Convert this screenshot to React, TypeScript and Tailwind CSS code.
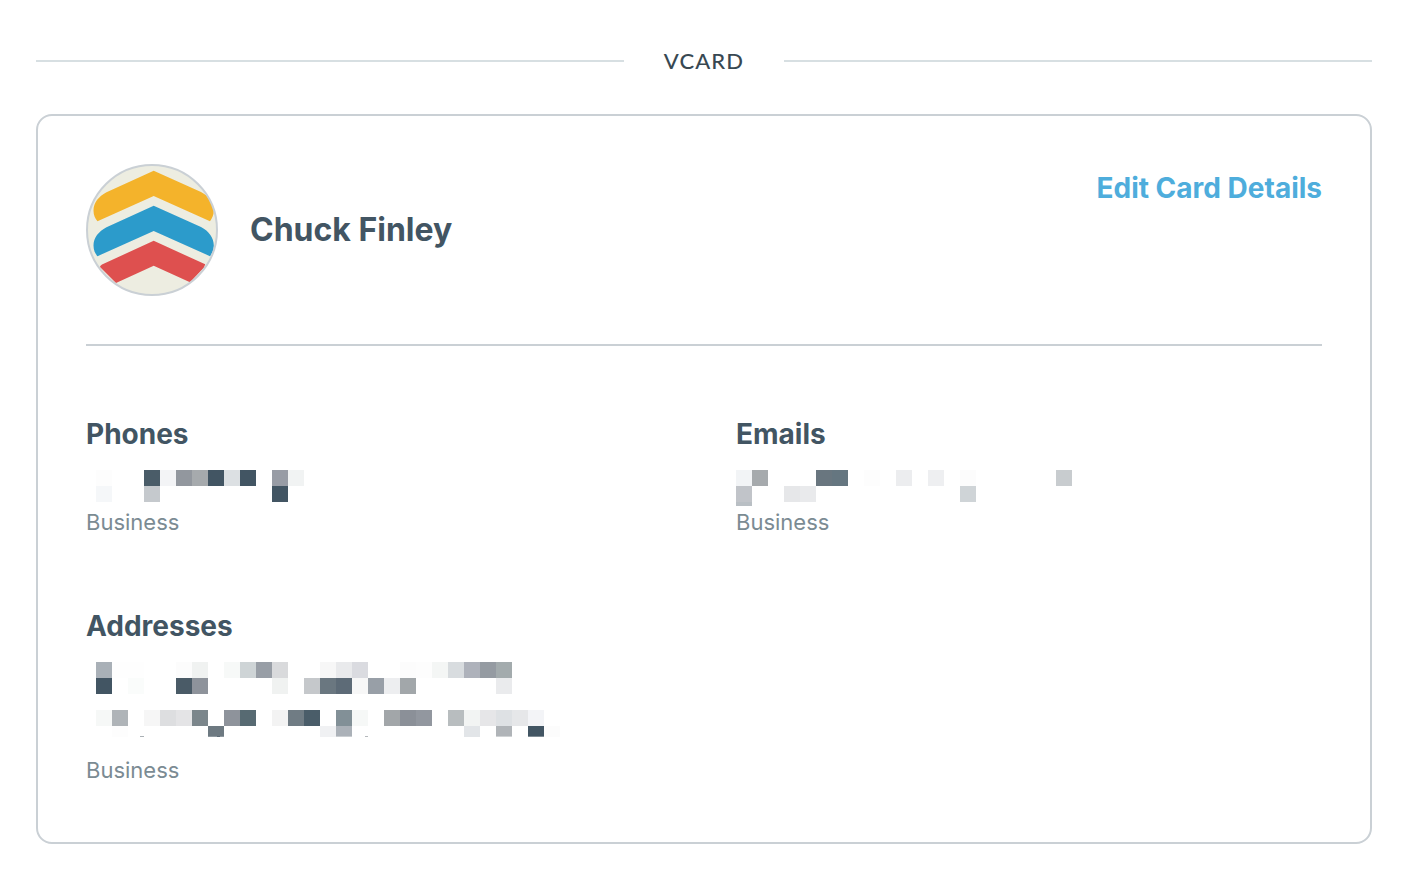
import React from 'react';

type Cell = [x: number, y: number, color: string, height?: number, width?: number];

const CELL = 16;

const phoneCells: Cell[] = [
  [10, 0, '#fdfdfd'],
  [58, 0, '#4a5c68'],
  [74, 0, '#f3f4f6'],
  [90, 0, '#92979e'],
  [106, 0, '#a6aaad'],
  [122, 0, '#425563'],
  [138, 0, '#dce0e3'],
  [154, 0, '#425563'],
  [186, 0, '#989ca5'],
  [202, 0, '#f1f3f3'],
  [10, 16, '#f5f7f9'],
  [58, 16, '#c5c9cd'],
  [186, 16, '#425563'],
];

const emailCells: Cell[] = [
  [0, 0, '#f2f4f6'],
  [16, 0, '#a6aaad'],
  [80, 0, '#69767f'],
  [96, 0, '#657680'],
  [128, 0, '#fdfdfd'],
  [160, 0, '#ecedef'],
  [192, 0, '#eeeff1'],
  [224, 0, '#fcfcfc'],
  [320, 0, '#c8cccf'],
  [0, 16, '#c1c4c9'],
  [0, 32, '#b9bfc4', 4],
  [48, 16, '#e6e7e9'],
  [64, 16, '#e9eaec'],
  [224, 16, '#cfd4d7'],
];

const addressCells: Cell[] = [
  [10, 0, '#a9b0b7'],
  [26, 0, '#fefefe'],
  [42, 0, '#fefefe'],
  [90, 0, '#fcfcfc'],
  [106, 0, '#f0f2f1'],
  [138, 0, '#f7f9f8'],
  [154, 0, '#ced4d6'],
  [170, 0, '#989ea6'],
  [186, 0, '#d9dadc'],
  [234, 0, '#f7f7f7'],
  [250, 0, '#e9eaec'],
  [266, 0, '#dadbe0'],
  [314, 0, '#fcfcfc'],
  [330, 0, '#fdfdfd'],
  [346, 0, '#f4f6f5'],
  [362, 0, '#d8dcdf'],
  [378, 0, '#aeb2bb'],
  [394, 0, '#959ba2'],
  [410, 0, '#a3abad'],
  [10, 16, '#425563'],
  [42, 16, '#fafcfb'],
  [90, 16, '#4a5b67'],
  [106, 16, '#8e939b'],
  [186, 16, '#f0f2f1'],
  [218, 16, '#c5c8cb'],
  [234, 16, '#6a7780'],
  [250, 16, '#5d6b77'],
  [266, 16, '#f7f7f7'],
  [282, 16, '#989fa7'],
  [298, 16, '#edeef0'],
  [314, 16, '#a2a7aa'],
  [410, 16, '#eaebed'],
  [10, 48, '#f6f8f7'],
  [26, 48, '#afb4b8'],
  [58, 48, '#f6f6f6'],
  [74, 48, '#dddee0'],
  [90, 48, '#e4e4e6'],
  [106, 48, '#7b868b'],
  [138, 48, '#8e939b'],
  [154, 48, '#576a72'],
  [186, 48, '#f3f3f3'],
  [202, 48, '#707c84'],
  [218, 48, '#4a5d69'],
  [250, 48, '#829097'],
  [266, 48, '#f6f8f7'],
  [298, 48, '#a2a6a9'],
  [314, 48, '#8b9098'],
  [330, 48, '#92979f'],
  [362, 48, '#b8bdbf'],
  [378, 48, '#f2f4f3'],
  [394, 48, '#e6e6e8'],
  [410, 48, '#dee1e4'],
  [426, 48, '#e6e7e9'],
  [442, 48, '#f3f4f7'],
  [26, 64, '#fdfdfd', 11],
  [122, 64, '#6d7981', 10],
  [122, 74, '#8e989f', 1],
  [234, 64, '#f0f1f3', 11],
  [250, 64, '#abb1b8', 10],
  [250, 74, '#c9cdd1', 1],
  [378, 64, '#e2e5e8', 11],
  [410, 64, '#b0b4b8', 10],
  [410, 74, '#cfd2d4', 1],
  [442, 64, '#425563', 10],
  [442, 74, '#7e8b94', 1],
  [458, 64, '#fcfcfc', 11],
  // tails of the letters below the last row
  [54, 74, '#aab0b5', 1, 4],
  [131, 74, '#5d6b77', 1, 3],
  [279, 74, '#b5b9bc', 1, 3],
];

const Redacted: React.FC<{ cells: Cell[]; width: number; height: number }> = ({
  cells,
  width,
  height,
}) => (
  <svg
    width={width}
    height={height}
    viewBox={`0 0 ${width} ${height}`}
    shapeRendering="crispEdges"
    className="mt-4 block max-w-full"
    aria-hidden="true"
  >
    {cells.map(([x, y, color, h = CELL, w = CELL], i) => (
      <rect key={i} x={x} y={y} width={w} height={h} fill={color} />
    ))}
  </svg>
);

const Avatar: React.FC = () => (
  <svg viewBox="0 0 132 132" className="size-[132px] shrink-0" aria-hidden="true">
    <defs>
      <clipPath id="avatar-clip">
        <circle cx="66" cy="66" r="65" />
      </clipPath>
    </defs>
    <g clipPath="url(#avatar-clip)">
      <rect width="132" height="132" fill="#edede1" />
      <path
        d="M67.7 6.8 L115 28 C123 32 127.8 39 127.8 46.5 C127.8 51 126 54.5 124 57.2 L67.7 32 L11.5 57.2 C9 54.5 7.5 51 7.5 46.5 C7.5 39 12.5 32.5 20.5 28.3 Z"
        fill="#f4b32b"
      />
      <path
        d="M67.7 41.8 L115 63 C123 67 127.8 74 127.8 81.5 C127.8 86 126 89.5 124 92.2 L67.7 67 L11.5 92.2 C9 89.5 7.5 86 7.5 81.5 C7.5 74 12.5 67.5 20.5 63.3 Z"
        fill="#2c9bcb"
      />
      <path
        d="M67.7 76.8 L119.2 100.3 L118 103.5 L104 118.3 L67.7 101.8 L30 119 L14 103 Q14 101.5 16 100.5 Z"
        fill="#de504f"
      />
    </g>
    <circle cx="66" cy="66" r="65" fill="none" stroke="#cad0d5" strokeWidth="2" />
  </svg>
);

const Section: React.FC<{ title: string; label: string; children: React.ReactNode }> = ({
  title,
  label,
  children,
}) => (
  <section>
    <h3 className="text-[28px] leading-10 font-bold text-[#425563]">{title}</h3>
    {children}
    <p className="text-[22px] leading-8 text-[#7b8b93]">{label}</p>
  </section>
);

const App: React.FC = () => {
  return (
    <main className="bg-white pt-11 pr-[30px] pb-6 pl-9 font-['Inter',sans-serif]">
      {/* Title with rules on both sides */}
      <div className="flex items-center gap-10">
        <div className="h-0.5 flex-1 bg-[#d7dfe2]" />
        <h1 className="font-['Lato',sans-serif] text-[22px] leading-[34px] font-medium tracking-wider text-[#384852]">
          VCARD
        </h1>
        <div className="h-0.5 flex-1 bg-[#d7dfe2]" />
      </div>

      {/* Card */}
      <article className="mt-9 rounded-2xl border-2 border-[#cad0d5] px-12 pt-12 pb-14">
        <header className="flex items-start justify-between border-b-2 border-[#cad0d5] pb-12">
          <div className="flex items-center gap-8">
            <Avatar />
            <h2 className="text-[32px] leading-10 font-bold text-[#425563]">Chuck Finley</h2>
          </div>
          <a href="#edit" className="mt-1 text-[28px] leading-10 font-bold text-[#4eaddc]">
            Edit Card Details
          </a>
        </header>

        <div className="grid grid-cols-2 gap-x-16 gap-y-[68px] pt-[68px]">
          <Section title="Phones" label="Business">
            <Redacted cells={phoneCells} width={240} height={36} />
          </Section>
          <Section title="Emails" label="Business">
            <Redacted cells={emailCells} width={352} height={36} />
          </Section>
          <Section title="Addresses" label="Business">
            <Redacted cells={addressCells} width={480} height={92} />
          </Section>
        </div>
      </article>
    </main>
  );
};

export default App;
